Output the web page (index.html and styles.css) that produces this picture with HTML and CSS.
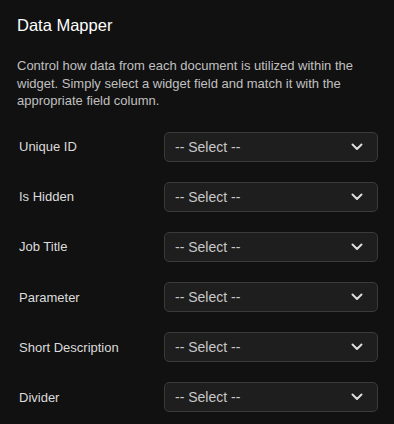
FILE: index.html
```html
<!DOCTYPE html>
<html lang="en">
<head>
  <meta charset="UTF-8" />
  <meta name="viewport" content="width=device-width, initial-scale=1.0"/>
  <title>Data Mapper</title>
  <link rel="stylesheet" href="styles.css">
</head>
<body>
  <div class="panel">
    <h2 class="panel-title">Data Mapper</h2>
    <p class="panel-desc">Control how data from each document is utilized within the widget. Simply select a widget field and match it with the appropriate field column.</p>

    <div class="mapper">
      <div class="row">
        <label class="row-label">Unique ID</label>
        <div class="select">
          <span>-- Select --</span>
          <svg class="chev" width="12" height="8" viewBox="0 0 12 8"><path d="M1.5 1.5 L6 6 L10.5 1.5" fill="none" stroke="#ddd" stroke-width="2" stroke-linecap="round" stroke-linejoin="round"/></svg>
        </div>
      </div>
      <div class="row">
        <label class="row-label">Is Hidden</label>
        <div class="select">
          <span>-- Select --</span>
          <svg class="chev" width="12" height="8" viewBox="0 0 12 8"><path d="M1.5 1.5 L6 6 L10.5 1.5" fill="none" stroke="#ddd" stroke-width="2" stroke-linecap="round" stroke-linejoin="round"/></svg>
        </div>
      </div>
      <div class="row">
        <label class="row-label">Job Title</label>
        <div class="select">
          <span>-- Select --</span>
          <svg class="chev" width="12" height="8" viewBox="0 0 12 8"><path d="M1.5 1.5 L6 6 L10.5 1.5" fill="none" stroke="#ddd" stroke-width="2" stroke-linecap="round" stroke-linejoin="round"/></svg>
        </div>
      </div>
      <div class="row">
        <label class="row-label">Parameter</label>
        <div class="select">
          <span>-- Select --</span>
          <svg class="chev" width="12" height="8" viewBox="0 0 12 8"><path d="M1.5 1.5 L6 6 L10.5 1.5" fill="none" stroke="#ddd" stroke-width="2" stroke-linecap="round" stroke-linejoin="round"/></svg>
        </div>
      </div>
      <div class="row">
        <label class="row-label">Short Description</label>
        <div class="select">
          <span>-- Select --</span>
          <svg class="chev" width="12" height="8" viewBox="0 0 12 8"><path d="M1.5 1.5 L6 6 L10.5 1.5" fill="none" stroke="#ddd" stroke-width="2" stroke-linecap="round" stroke-linejoin="round"/></svg>
        </div>
      </div>
      <div class="row">
        <label class="row-label">Divider</label>
        <div class="select">
          <span>-- Select --</span>
          <svg class="chev" width="12" height="8" viewBox="0 0 12 8"><path d="M1.5 1.5 L6 6 L10.5 1.5" fill="none" stroke="#ddd" stroke-width="2" stroke-linecap="round" stroke-linejoin="round"/></svg>
        </div>
      </div>
    </div>
  </div>
</body>
</html>
```

FILE: styles.css
```css
body {
  margin: 0;
  background-color: #111111;
  font-family: 'Liberation Sans', Arial, sans-serif;
  color: #dddddd;
}

.panel {
  padding: 14px 16px 0 17px;
}

.panel-title {
  margin: 0;
  font-size: 16.5px;
  font-weight: normal;
  color: #ffffff;
  line-height: 22px;
}

.panel-desc {
  margin: 21px 0 0;
  font-size: 13px;
  line-height: 17.5px;
  color: #c0c0c0;
}

.mapper {
  margin-top: 22px;
  display: flex;
  flex-direction: column;
  gap: 20.2px;
}

.row {
  display: flex;
  align-items: center;
}

.row-label {
  width: 145px;
  padding-left: 2px;
  font-size: 13px;
  color: #dcdcdc;
}

.select {
  flex: 1;
  height: 30px;
  box-sizing: border-box;
  display: flex;
  align-items: center;
  justify-content: space-between;
  padding: 0 14px 0 10px;
  background-color: #1e1e1e;
  border: 1px solid #3a3a3a;
  border-radius: 5px;
  font-size: 14px;
  color: #c8c8c8;
}

.chev {
  display: block;
}
```
